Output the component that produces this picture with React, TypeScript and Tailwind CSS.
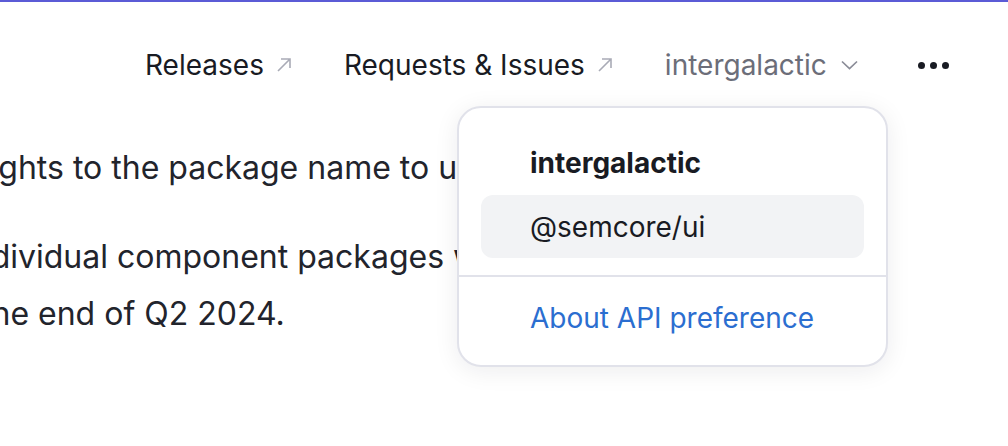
const ArrowUpRight = () => (
  <svg width="16" height="16" viewBox="0 0 16 16" fill="none" className="text-[#a9abb6]">
    <path d="M2 14L14 2M5 2H14V11" stroke="currentColor" strokeWidth="1.6" />
  </svg>
);

const Chevron = () => (
  <svg width="17" height="10" viewBox="0 0 17 10" fill="none" className="text-[#8a8c97]">
    <path d="M1 1.5L8.5 8.5L16 1.5" stroke="currentColor" strokeWidth="1.7" />
  </svg>
);

export default function App() {
  return (
    <div className="relative w-[1008px] h-[446px] overflow-hidden bg-white border-t-2 border-[#5b5bd6] font-['Inter',sans-serif] text-[#191b23]">
      <header className="flex items-center h-[126px] pl-[145px] text-[28px]">
        <nav className="flex items-center">
          <a className="flex items-center gap-[12px]">
            Releases <ArrowUpRight />
          </a>
          <a className="flex items-center gap-[12px] ml-[52px]">
            Requests &amp; Issues <ArrowUpRight />
          </a>
          <button className="flex items-center gap-[14px] ml-[52px] text-[#6c6e79]">
            intergalactic <Chevron />
          </button>
          <button className="flex items-center gap-[5px] ml-[60px]">
            <span className="w-[7px] h-[7px] rounded-full bg-[#191b23]" />
            <span className="w-[7px] h-[7px] rounded-full bg-[#191b23]" />
            <span className="w-[7px] h-[7px] rounded-full bg-[#191b23]" />
          </button>
        </nav>
      </header>

      <main className="text-[32px] leading-[57px] whitespace-nowrap text-[#22242c]">
        <p className="-ml-[22px] mt-[11px]">rights to the package name to use the new version</p>
        <p className="-ml-[36px] mt-[32px]">individual component packages will be deprecated by</p>
        <p className="-ml-[19px]">the end of Q2 2024.</p>
      </main>

      <div className="absolute left-[457px] top-[104px] w-[431px] h-[261px] bg-white border-2 border-[#e1e2ea] rounded-[24px] shadow-[0_4px_24px_rgba(25,27,35,0.08)] flex flex-col">
        <div className="px-[22px] pt-[38px] pb-[17px]">
          <div className="pl-[49px] font-bold text-[28px] leading-[34px]">intergalactic</div>
          <div className="mt-[15px] h-[63px] rounded-[12px] bg-[#f2f3f5] flex items-center pl-[49px] text-[28px]">
            @semcore/ui
          </div>
        </div>
        <div className="border-t-2 border-[#e1e2ea]" />
        <div className="pl-[71px] pt-[24px] text-[28px] leading-[34px] text-[#2b6ed0]">About API preference</div>
      </div>
    </div>
  );
}
